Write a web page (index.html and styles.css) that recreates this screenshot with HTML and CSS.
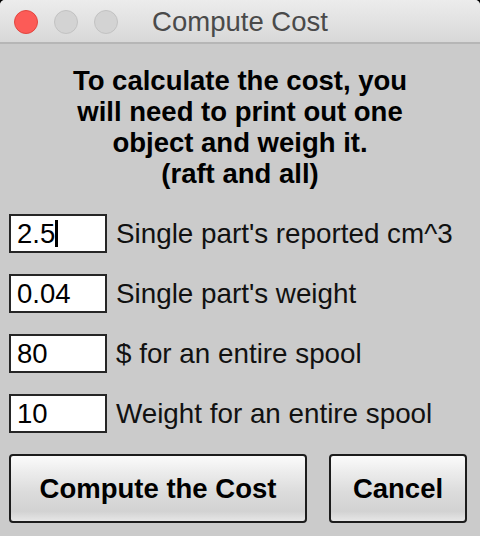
FILE: index.html
```html
<!DOCTYPE html>
<html>
<head>
<meta charset="utf-8">
<title>Compute Cost</title>
<link rel="stylesheet" href="styles.css">
</head>
<body>
<div class="window">
  <div class="titlebar">
    <div class="lights">
      <span class="light close"></span>
      <span class="light off"></span>
      <span class="light off"></span>
    </div>
    <div class="title">Compute Cost</div>
    <div></div>
  </div>
  <div class="content">
    <p class="intro">To calculate the cost, you<br>will need to print out one<br>object and weigh it.<br>(raft and all)</p>
    <div class="rows">
      <div class="row"><div class="field">2.5<span class="caret"></span></div><span class="label">Single part's reported cm^3</span></div>
      <div class="row"><div class="field">0.04</div><span class="label">Single part's weight</span></div>
      <div class="row"><div class="field">80</div><span class="label">$ for an entire spool</span></div>
      <div class="row"><div class="field">10</div><span class="label">Weight for an entire spool</span></div>
    </div>
    <div class="buttons">
      <button class="btn btn-main">Compute the Cost</button>
      <button class="btn btn-cancel">Cancel</button>
    </div>
  </div>
</div>
</body>
</html>
```
FILE: styles.css
```css
html, body {
  margin: 0;
  padding: 0;
  background: #000;
}
.window {
  width: 480px;
  height: 536px;
  background: #cbcbcb;
  border-radius: 5px 5px 0 0;
  overflow: hidden;
  display: flex;
  flex-direction: column;
  font-family: "Liberation Sans", Arial, sans-serif;
}
.titlebar {
  height: 42px;
  border-bottom: 2px solid #b6b6b6;
  background: linear-gradient(#ececec, #d8d8d8);
  display: grid;
  grid-template-columns: 1fr auto 1fr;
  align-items: center;
}
.lights {
  display: flex;
  gap: 16px;
  padding-left: 14px;
  padding-top: 2px;
}
.light {
  width: 22px;
  height: 22px;
  border-radius: 50%;
  border: 1px solid #c2c2c2;
  background: #d3d3d3;
}
.light.close {
  background: #fc5b57;
  border-color: #e2463f;
}
.title {
  font-size: 27.5px;
  color: #4a4a4a;
  padding-top: 2px;
}
.content {
  padding: 21px 13px 0 9px;
  display: flex;
  flex-direction: column;
}
.intro {
  margin: 0;
  text-align: center;
  font-weight: bold;
  font-size: 27.5px;
  line-height: 31px;
  color: #000;
  padding-left: 4px;
}
.rows {
  margin-top: 25px;
  display: flex;
  flex-direction: column;
  gap: 21px;
}
.row {
  display: flex;
  align-items: center;
  gap: 9px;
}
.field {
  width: 98px;
  height: 39px;
  box-sizing: border-box;
  border: 2px solid #262626;
  background: #fff;
  padding-left: 6px;
  font-size: 27.5px;
  line-height: 35px;
  color: #000;
  display: flex;
  align-items: center;
}
.caret {
  display: inline-block;
  width: 3px;
  height: 27px;
  background: #000;
}
.label {
  font-size: 27.8px;
  color: #111;
}
.buttons {
  margin-top: 21px;
  display: flex;
  gap: 22px;
}
.btn {
  height: 69px;
  box-sizing: border-box;
  border: 2px solid #1c1c1c;
  border-radius: 4px;
  background: linear-gradient(#fbfbfb 0%, #ececec 25%, #dcdcdc 55%, #d2d2d2 85%, #e6e6e6 100%);
  font-family: "Liberation Sans", Arial, sans-serif;
  font-weight: bold;
  font-size: 27.5px;
  color: #000;
  padding: 0;
}
.btn-main {
  width: 298px;
}
.btn-cancel {
  width: 138px;
}
```
